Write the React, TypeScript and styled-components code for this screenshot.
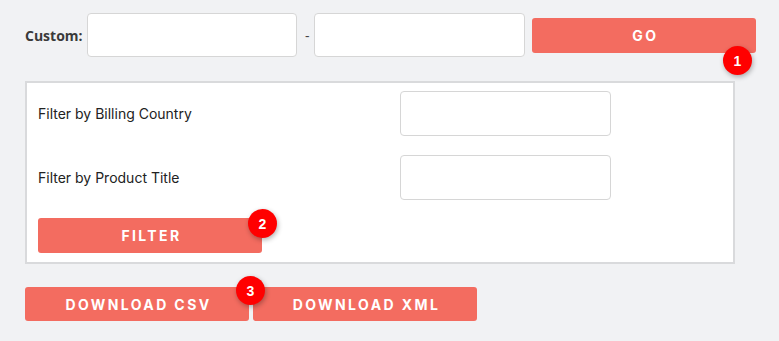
import styled, { createGlobalStyle } from "styled-components";

const GlobalStyle = createGlobalStyle`
  body {
    margin: 0;
    background: #f1f2f4;
    font-family: "Open Sans", "Liberation Sans", sans-serif;
  }
`;

const Page = styled.div`
  padding: 13px 23px 0 25px;
  width: 779px;
  height: 341px;
  box-sizing: border-box;
`;

const CustomRow = styled.div`
  display: flex;
  align-items: flex-start;
`;

const CustomLabel = styled.label`
  font-weight: 700;
  font-size: 14px;
  color: #3a3a3a;
  margin-top: 13px;
  margin-right: 4px;
`;

const TextBox = styled.input`
  width: 211px;
  height: 44px;
  box-sizing: border-box;
  border: 1px solid #d6d6d6;
  border-radius: 4px;
  background: #fff;
  outline: none;
`;

const Dash = styled.span`
  font-size: 14px;
  color: #444;
  margin: 13px 5px 0 8px;
`;

const Button = styled.button<{ $width?: number }>`
  position: relative;
  width: ${({ $width }) => $width ?? 224}px;
  height: 35px;
  border: none;
  border-radius: 3px;
  background: #f36c60;
  color: #fff;
  font-family: Inter, "Liberation Sans", sans-serif;
  font-weight: 700;
  font-size: 14px;
  letter-spacing: 2.4px;
  padding: 0 0 0 3px;
  text-transform: uppercase;
`;

const GoButton = styled(Button)`
  margin-left: 7px;
  margin-top: 5px;
`;

const Badge = styled.span<{ $right: number; $top: number }>`
  position: absolute;
  right: ${({ $right }) => $right}px;
  top: ${({ $top }) => $top}px;
  width: 29px;
  height: 29px;
  border-radius: 50%;
  background: #ff0000;
  color: #fff;
  font-family: "Liberation Sans", Arial, sans-serif;
  font-weight: 700;
  font-size: 14px;
  letter-spacing: 0;
  display: flex;
  align-items: center;
  justify-content: center;
  box-shadow: 1px 2px 5px rgba(0, 0, 0, 0.3);
  z-index: 2;
`;

const Panel = styled.div`
  margin-top: 24px;
  width: 710px;
  height: 183px;
  box-sizing: border-box;
  background: #fff;
  border: 2px solid #d9dadc;
  padding: 8px 12px 9px 11px;
  display: flex;
  flex-direction: column;
`;

const FilterRow = styled.div`
  display: grid;
  grid-template-columns: 362px 211px;
  align-items: center;
  margin-bottom: 19px;
`;

const FilterLabel = styled.label`
  font-family: Inter, "Liberation Sans", sans-serif;
  font-size: 14px;
  color: #222;
`;

const FilterBox = styled(TextBox)`
  height: 45px;
`;

const PanelButton = styled(Button)`
  margin-top: -1px;
  height: 36px;
`;

const DownloadRow = styled.div`
  display: flex;
  gap: 4px;
  margin-top: 23px;
`;

const DownloadButton = styled(Button)`
  height: 34px;
`;

export default function App() {
  return (
    <>
      <GlobalStyle />
      <Page>
        <CustomRow>
          <CustomLabel>Custom:</CustomLabel>
          <TextBox />
          <Dash>-</Dash>
          <TextBox />
          <GoButton $width={225}>
            GO
            <Badge $right={4} $top={28}>1</Badge>
          </GoButton>
        </CustomRow>
        <Panel>
          <FilterRow>
            <FilterLabel>Filter by Billing Country</FilterLabel>
            <FilterBox />
          </FilterRow>
          <FilterRow>
            <FilterLabel>Filter by Product Title</FilterLabel>
            <FilterBox />
          </FilterRow>
          <PanelButton>
            FILTER
            <Badge $right={-15} $top={-9}>2</Badge>
          </PanelButton>
        </Panel>
        <DownloadRow>
          <DownloadButton>
            DOWNLOAD CSV
            <Badge $right={-16} $top={-11}>3</Badge>
          </DownloadButton>
          <DownloadButton>DOWNLOAD XML</DownloadButton>
        </DownloadRow>
      </Page>
    </>
  );
}
